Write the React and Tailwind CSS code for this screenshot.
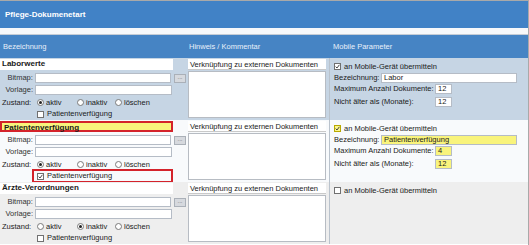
import React from 'react';

function Radio({ checked, label }) {
    return (
        <span className="flex items-center">
            <span className="w-[7px] h-[7px] rounded-full border border-[#7a7a7a] bg-white flex items-center justify-center mr-[2px]">
                {checked && <span className="w-[3px] h-[3px] rounded-full bg-[#222]" />}
            </span>
            <span>{label}</span>
        </span>
    );
}

function Box({ checked, yellow }) {
    return (
        <span
            className={
                "w-[7px] h-[7px] border flex items-center justify-center " +
                (yellow ? "border-[#b8a800] bg-[#fbf68a]" : "border-[#707070] bg-white")
            }
        >
            {checked && (
                <svg width="5" height="5" viewBox="0 0 5 5">
                    <path d="M0.6 2.6 L2 4 L4.4 0.8" fill="none" stroke="#333" strokeWidth="0.9" />
                </svg>
            )}
        </span>
    );
}

function Field({ value, yellow, className }) {
    return (
        <div
            className={
                "h-[10px] border border-[#b5bcc6] leading-[8px] px-[2px] " +
                (yellow ? "bg-[#f9f47c] " : "bg-white ") +
                className
            }
        >
            {value}
        </div>
    );
}

function Row({ bg, name, highlight, state, mobile }) {
    return (
        <div className={"flex h-[62px] overflow-hidden " + bg}>
            {/* Bezeichnung */}
            <div className="w-[186px] pt-[1px] shrink-0">
                <div
                    className={
                        "w-[173px] h-[11px] leading-[9px] font-bold text-[8px] px-[2px] " +
                        (highlight ? "bg-[#f9f47c] border-2 border-[#d4232b] leading-[7px]" : "bg-white")
                    }
                >
                    {name}
                </div>
                <div className="flex items-center mt-[3px] h-[10px] text-[#333]">
                    <span className="w-[34px] text-right pr-[1px]">Bitmap:</span>
                    <Field className="w-[137px] ml-[1px]" />
                    <span className="ml-[3px] w-[12px] h-[9px] bg-[#d6d9de] border border-[#aab0b8] text-[6px] leading-[5px] text-center text-[#666]">...</span>
                </div>
                <div className="flex items-center mt-[2px] h-[10px] text-[#333]">
                    <span className="w-[34px] text-right pr-[1px]">Vorlage:</span>
                    <Field className="w-[137px] ml-[1px]" />
                </div>
                <div className="flex items-center mt-[2px] h-[11px]">
                    <span className="w-[37px] pl-[2px]">Zustand:</span>
                    <span className="w-[40px]"><Radio checked={state === 0} label="aktiv" /></span>
                    <span className="w-[38px]"><Radio checked={state === 1} label="inaktiv" /></span>
                    <Radio checked={state === 2} label="löschen" />
                </div>
                <div className="flex items-center h-[12px]">
                    <div
                        className={
                            "flex items-center h-[14px] " +
                            (highlight ? "ml-[32px] w-[141px] border-2 border-[#d4232b] pl-[3px]" : "ml-[37px]")
                        }
                    >
                        <Box checked={highlight} />
                        <span className="ml-[3px]">Patientenverfügung</span>
                    </div>
                </div>
            </div>

            {/* Hinweis */}
            <div className="w-[143px] shrink-0 pl-[2px] pr-[3px] pt-[1px] pb-[2px] flex flex-col">
                <div className="h-[11px] bg-white leading-[11px] px-[2px] border-b border-[#c9c9c9]">
                    Verknüpfung zu externen Dokumenten
                </div>
                <div className="flex-1 mt-[1px] bg-white border border-[#b7bcc3]" />
            </div>

            {/* Mobile */}
            <div className="flex-1 border-l border-[#b9c2cc] pl-[4px] pt-[3px]">
                <div className="flex items-center h-[11px]">
                    <Box checked={!!mobile} yellow={mobile && mobile.yellow} />
                    <span className="ml-[3px]">an Mobile-Gerät übermitteln</span>
                </div>
                {mobile && (
                    <>
                        <div className="flex items-center h-[10px] mt-[1px]">
                            <span className="w-[47px]">Bezeichnung:</span>
                            <Field className="w-[136px]" value={mobile.name} yellow={mobile.yellow} />
                        </div>
                        <div className="flex items-center h-[10px] mt-[1px]">
                            <span className="w-[101px]">Maximum Anzahl Dokumente:</span>
                            <Field className="w-[17px]" value={mobile.max} yellow={mobile.yellow} />
                        </div>
                        <div className="flex items-center h-[10px] mt-[3px]">
                            <span className="w-[101px]">Nicht älter als (Monate):</span>
                            <Field className="w-[17px]" value="12" yellow={mobile.yellow} />
                        </div>
                    </>
                )}
            </div>
        </div>
    );
}

export default function App() {
    return (
        <div
            className="w-[529px] h-[245px] overflow-hidden bg-white text-[7.5px] text-[#1a1a1a] border-t border-r border-[#a9a9a9]"
            style={{ fontFamily: '"Liberation Sans", Arial, sans-serif' }}
        >
            <div className="h-[27px] bg-[#4182c6] flex items-center pl-[5px] text-white font-bold text-[8px]">
                Pflege-Dokumenetart
            </div>
            <div className="h-[7px] bg-[#f7f8fa] border-b border-[#c5ccd5]" />
            <div className="h-[23px] bg-[#4684c4] flex items-center text-[#e8f0fa]">
                <span className="w-[189px] pl-[3px]">Bezeichnung</span>
                <span className="w-[144px]">Hinweis / Kommentar</span>
                <span>Mobile Parameter</span>
            </div>
            <Row
                bg="bg-[#c6d5e4]"
                name="Laborwerte"
                state={0}
                mobile={{ name: "Labor", max: "12" }}
            />
            <Row
                bg="bg-[#f8fafc]"
                name="Patientenverfügung"
                highlight
                state={0}
                mobile={{ name: "Patientenverfügung", max: "4", yellow: true }}
            />
            <Row bg="bg-[#eeeeee]" name="Ärzte-Verordnungen" state={1} />
        </div>
    );
}
